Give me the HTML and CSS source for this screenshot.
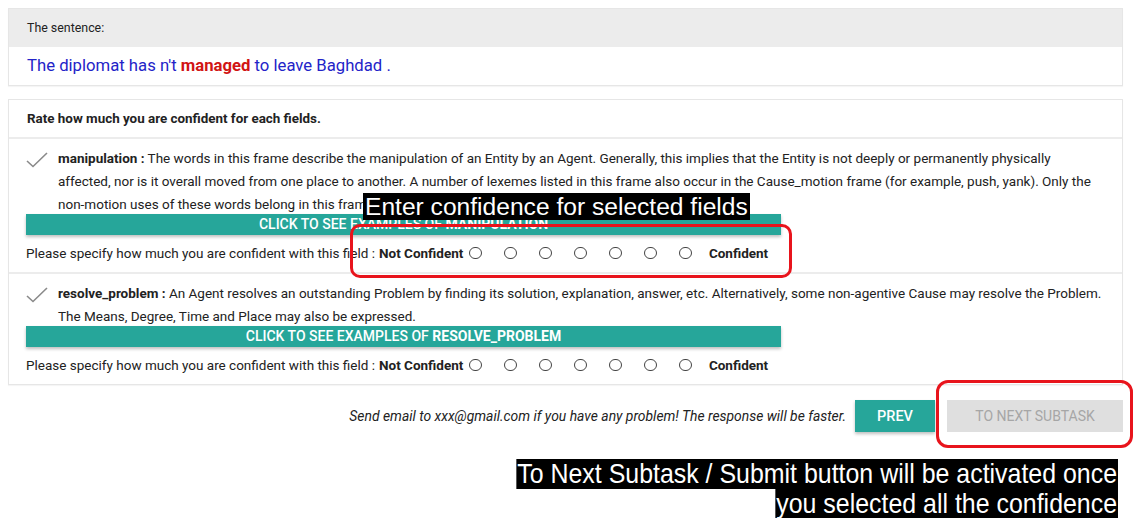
FILE: index.html
```html
<!DOCTYPE html>
<html>
<head>
<meta charset="utf-8">
<link rel="stylesheet" href="styles.css">
</head>
<body>
<div class="page">
  <section class="card">
    <div class="card-head">The sentence:</div>
    <div class="sentence">The diplomat has n't <b class="target">managed</b> to leave Baghdad .</div>
  </section>

  <section class="card card-rate">
    <div class="rate-head">Rate how much you are confident for each fields.</div>

    <div class="item">
      <div class="desc">
        <svg class="check" viewBox="0 0 22 16" width="22" height="16"><path d="M1 9 L7 14.5 L21 1" fill="none" stroke="#8a8a8a" stroke-width="1.6"/></svg>
        <p><b>manipulation :</b> The words in this frame describe the manipulation of an Entity by an Agent. Generally, this implies that the Entity is not deeply or permanently physically affected, nor is it overall moved from one place to another. A number of lexemes listed in this frame also occur in the Cause_motion frame (for example, push, yank). Only the non-motion uses of these words belong in this frame.</p>
      </div>
      <div class="examples">CLICK TO SEE EXAMPLES OF <b>MANIPULATION</b></div>
      <div class="scale">
        <span>Please specify how much you are confident with this field :</span>
        <b class="end">Not Confident</b>
        <span class="radios"><i></i><i></i><i></i><i></i><i></i><i></i><i></i></span>
        <b class="end">Confident</b>
      </div>
    </div>

    <div class="item">
      <div class="desc">
        <svg class="check" viewBox="0 0 22 16" width="22" height="16"><path d="M1 9 L7 14.5 L21 1" fill="none" stroke="#8a8a8a" stroke-width="1.6"/></svg>
        <p><b>resolve_problem :</b> An Agent resolves an outstanding Problem by finding its solution, explanation, answer, etc. Alternatively, some non-agentive Cause may resolve the Problem. The Means, Degree, Time and Place may also be expressed.</p>
      </div>
      <div class="examples">CLICK TO SEE EXAMPLES OF <b>RESOLVE_PROBLEM</b></div>
      <div class="scale">
        <span>Please specify how much you are confident with this field :</span>
        <b class="end">Not Confident</b>
        <span class="radios"><i></i><i></i><i></i><i></i><i></i><i></i><i></i></span>
        <b class="end">Confident</b>
      </div>
    </div>
  </section>

  <div class="footer">
    <em>Send email to xxx@gmail.com if you have any problem! The response will be faster.</em>
    <button class="btn prev">PREV</button>
    <button class="btn next" disabled>TO NEXT SUBTASK</button>
  </div>
</div>

<div class="label label-enter">Enter confidence for selected fields</div>
<div class="ring ring-scale"></div>
<div class="ring ring-next"></div>
<div class="label-note"><span>To Next Subtask / Submit button will be activated once</span><span>you selected all the confidence</span></div>
</body>
</html>
```

FILE: styles.css
```css
html, body { margin: 0; padding: 0; background: #fff; }
body {
  position: relative;
  width: 1143px;
  height: 531px;
  overflow: hidden;
  font-family: Roboto, "Liberation Sans", sans-serif;
  color: #222;
}
.page { padding: 8px 20px 0 8px; }

.card {
  border: 1px solid #e6e6e6;
  box-shadow: 0 1px 1px rgba(0,0,0,0.04);
  background: #fff;
}
.card-head {
  background: #ececec;
  height: 38px;
  line-height: 38px;
  padding-left: 18px;
  font-size: 12.4px;
  color: #222;
}
.sentence {
  height: 38px;
  line-height: 38px;
  padding-left: 18px;
  font-size: 16.7px;
  color: #2323c8;
}
.sentence .target { color: #d11414; font-weight: 700; }

.card-rate { margin-top: 13px; }
.rate-head {
  height: 37px;
  line-height: 37px;
  padding-left: 18px;
  font-size: 13.4px;
  font-weight: 700;
  border-bottom: 2px solid #ececec;
}
.item {
  padding: 8px 0 1px 17px;
  font-size: 13.5px;
}
.item + .item { border-top: 2px solid #ececec; }
.desc { display: flex; align-items: flex-start; }
.check { flex: none; margin: 5px 10px 0 0; }
.desc p {
  margin: 0 18px 0 0;
  line-height: 23px;
}
.examples {
  margin-top: -2px;
  width: 755px;
  height: 21px;
  line-height: 21px;
  background: #26a69a;
  color: #fff;
  text-align: center;
  font-size: 14px;
  font-weight: 500;
  box-shadow: 0 2px 3px rgba(0,0,0,0.25);
}
.examples b { font-weight: 700; }
.scale {
  display: flex;
  align-items: center;
  height: 36px;
  white-space: nowrap;
}
.scale .end { font-weight: 700; margin-left: 4px; }
.radios { display: flex; gap: 22.5px; margin: 0 13px 0 6px; }
.radios i {
  display: block;
  width: 10.5px;
  height: 10.5px;
  border: 1.5px solid #444;
  border-radius: 50%;
}

.footer {
  display: flex;
  justify-content: flex-end;
  align-items: center;
  margin-top: 15px;
}
.footer em { font-size: 13.9px; color: #222; margin-right: 9px; }
.btn {
  border: none;
  height: 32px;
  font-family: Roboto, "Liberation Sans", sans-serif;
  font-size: 14.5px;
  font-weight: 500;
  padding: 0;
}
.prev {
  width: 80px;
  background: #26a69a;
  color: #fff;
  box-shadow: 0 2px 3px rgba(0,0,0,0.25);
  margin-right: 12px;
}
.next {
  width: 176px;
  background: #dfdfdf;
  color: #a6a6a6;
  font-size: 14px;
  font-weight: 400;
}

.label {
  position: absolute;
  background: #000;
  color: #fff;
  font-family: "Liberation Sans", Arial, sans-serif;
}
.label-enter {
  left: 363px;
  top: 193px;
  height: 27px;
  line-height: 27px;
  font-size: 24.6px;
  padding: 0 2px;
}
.ring {
  position: absolute;
  border: 3px solid #e8141c;
  border-radius: 10px;
}
.ring-scale { left: 350px; top: 224px; width: 436px; height: 48px; }
.ring-next { left: 936px; top: 380px; width: 191px; height: 62px; border-radius: 12px; }
.label-note {
  position: absolute;
  right: 25px;
  top: 459px;
  display: flex;
  flex-direction: column;
  align-items: flex-end;
  font-family: "Liberation Sans", Arial, sans-serif;
  font-size: 28px;
  line-height: 29.5px;
  color: #fff;
  transform: scaleX(0.89);
  transform-origin: right top;
}
.label-note span { background: #000; padding: 0 1px; }
```
